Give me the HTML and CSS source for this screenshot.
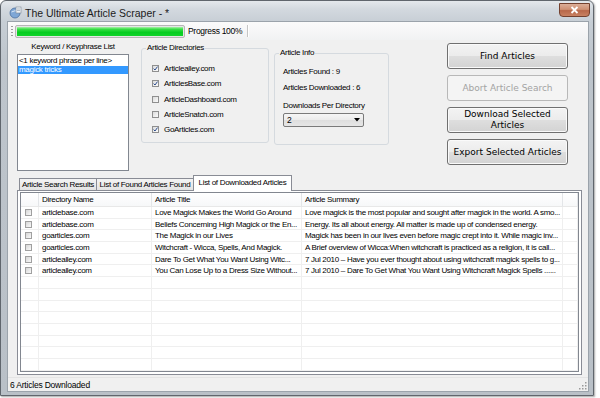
FILE: index.html
```html
<!DOCTYPE html>
<html>
<head>
<meta charset="utf-8">
<title>The Ultimate Article Scraper</title>
<link rel="stylesheet" href="styles.css">
</head>
<body>
<div class="window">
  <div class="titlebar">
    <svg class="app-icon" width="13" height="13" viewBox="0 0 13 13">
      <circle cx="6" cy="7" r="5" fill="#7fa7d6" stroke="#4a6f9e" stroke-width="0.8"/>
      <path d="M2.5 6 Q6 3.5 9.5 6" fill="none" stroke="#dbe8f6" stroke-width="1"/>
      <rect x="7" y="1" width="5" height="6" fill="#eef2f6" stroke="#7d8894" stroke-width="0.6"/>
      <path d="M8 3h3M8 4.5h3" stroke="#8a96a3" stroke-width="0.6"/>
    </svg>
    <span class="title">The Ultimate Article Scraper - *</span>
    <div class="close">
      <svg width="9" height="8" viewBox="0 0 9 8"><path d="M1.5 1l6 6M7.5 1l-6 6" stroke="#fff" stroke-width="1.8"/></svg>
    </div>
  </div>
  <div class="client">
    <div class="toolstrip">
      <span class="grip"></span>
      <div class="progress"><div class="progress-fill" style="width:100%"></div></div>
      <span class="progress-label">Progress 100%</span>
      <span class="sep"></span>
    </div>
    <div class="top">
      <div class="kw">
        <div class="kw-label">Keyword / Keyphrase List</div>
        <div class="listbox">
          <div class="item">&lt;1 keyword phrase per line&gt;</div>
          <div class="item selected">magick tricks</div>
        </div>
      </div>
      <div class="group dirs">
        <span class="group-label">Article Directories</span>
        <div class="check-row"><span class="cb"><svg width="5" height="5" viewBox="0 0 5 5"><path d="M0.6 2.6L2 4L4.5 0.6" fill="none" stroke="#2c4c8c" stroke-width="1"/></svg></span>Articlealley.com</div>
        <div class="check-row"><span class="cb"><svg width="5" height="5" viewBox="0 0 5 5"><path d="M0.6 2.6L2 4L4.5 0.6" fill="none" stroke="#2c4c8c" stroke-width="1"/></svg></span>ArticlesBase.com</div>
        <div class="check-row"><span class="cb"></span>ArticleDashboard.com</div>
        <div class="check-row"><span class="cb"></span>ArticleSnatch.com</div>
        <div class="check-row"><span class="cb"><svg width="5" height="5" viewBox="0 0 5 5"><path d="M0.6 2.6L2 4L4.5 0.6" fill="none" stroke="#2c4c8c" stroke-width="1"/></svg></span>GoArticles.com</div>
      </div>
      <div class="group info">
        <span class="group-label">Article Info</span>
        <div class="info-line first">Articles Found : 9</div>
        <div class="info-line">Articles Downloaded : 6</div>
        <div class="info-line spaced">Downloads Per Directory</div>
        <div class="combo"><span>2</span><svg width="6" height="4" viewBox="0 0 6 4"><path d="M0 0h6L3 3.5z" fill="#000"/></svg></div>
      </div>
      <div class="buttons">
        <div class="btn">Find Articles</div>
        <div class="btn disabled">Abort Article Search</div>
        <div class="btn">Download Selected<br>Articles</div>
        <div class="btn">Export Selected Articles</div>
      </div>
    </div>
    <div class="tabstrip">
      <div class="tab t1">Article Search Results</div>
      <div class="tab t2">List of Found Articles Found</div>
      <div class="tab t3 active">List of Downloaded Articles</div>
    </div>
    <div class="tabpage">
      <div class="listview">
        <div class="lv-row lv-head">
          <div class="hc"></div><div class="hc">Directory Name</div><div class="hc">Article Title</div><div class="hc">Article Summary</div><div class="hc"></div>
        </div>
        <div class="lv-row"><div class="c"><span class="rcb"></span></div><div class="c">articlebase.com</div><div class="c">Love Magick Makes the World Go Around</div><div class="c">Love magick is the most popular and sought after magick in the world. A smo...</div><div class="c"></div></div>
        <div class="lv-row"><div class="c"><span class="rcb"></span></div><div class="c">articlebase.com</div><div class="c">Beliefs Concerning High Magick or the En...</div><div class="c">Energy. Its all about energy. All matter is made up of condensed energy.</div><div class="c"></div></div>
        <div class="lv-row"><div class="c"><span class="rcb"></span></div><div class="c">goarticles.com</div><div class="c">The Magick in our Lives</div><div class="c">Magick has been in our lives even before magic crept into it. While magic inv...</div><div class="c"></div></div>
        <div class="lv-row"><div class="c"><span class="rcb"></span></div><div class="c">goarticles.com</div><div class="c">Witchcraft - Wicca, Spells, And Magick.</div><div class="c">A Brief overview of Wicca:When witchcraft is practiced as a religion, it is call...</div><div class="c"></div></div>
        <div class="lv-row"><div class="c"><span class="rcb"></span></div><div class="c">articlealley.com</div><div class="c">Dare To Get What You Want Using Witc...</div><div class="c">7 Jul 2010 – Have you ever thought about using witchcraft magick spells to g...</div><div class="c"></div></div>
        <div class="lv-row"><div class="c"><span class="rcb"></span></div><div class="c">articlealley.com</div><div class="c">You Can Lose Up to a Dress Size Without...</div><div class="c">7 Jul 2010 – Dare To Get What You Want Using Witchcraft Magick Spells ......</div><div class="c"></div></div>
        <div class="lv-row"><div class="c"></div><div class="c"></div><div class="c"></div><div class="c"></div><div class="c"></div></div>
        <div class="lv-row"><div class="c"></div><div class="c"></div><div class="c"></div><div class="c"></div><div class="c"></div></div>
        <div class="lv-row"><div class="c"></div><div class="c"></div><div class="c"></div><div class="c"></div><div class="c"></div></div>
        <div class="lv-row"><div class="c"></div><div class="c"></div><div class="c"></div><div class="c"></div><div class="c"></div></div>
        <div class="lv-row"><div class="c"></div><div class="c"></div><div class="c"></div><div class="c"></div><div class="c"></div></div>
        <div class="lv-row"><div class="c"></div><div class="c"></div><div class="c"></div><div class="c"></div><div class="c"></div></div>
        <div class="lv-row"><div class="c"></div><div class="c"></div><div class="c"></div><div class="c"></div><div class="c"></div></div>
        <div class="lv-row"><div class="c"></div><div class="c"></div><div class="c"></div><div class="c"></div><div class="c"></div></div>
      </div>
    </div>
    <div class="statusbar">
      <span class="status-text">6 Articles Downloaded</span>
      <svg class="resize-grip" width="8" height="8" viewBox="0 0 8 8">
        <g fill="#9a9a9a"><rect x="6" y="0" width="1.5" height="1.5"/><rect x="3" y="3" width="1.5" height="1.5"/><rect x="6" y="3" width="1.5" height="1.5"/><rect x="0" y="6" width="1.5" height="1.5"/><rect x="3" y="6" width="1.5" height="1.5"/><rect x="6" y="6" width="1.5" height="1.5"/></g>
      </svg>
    </div>
  </div>
</div>
</body>
</html>
```
FILE: styles.css
```css
* { box-sizing: border-box; }
html, body { margin: 0; padding: 0; background: #ffffff; }
body {
  width: 600px; height: 398px; overflow: hidden;
  font-family: "Liberation Sans", Arial, sans-serif;
  font-size: 8px; letter-spacing: -0.3px; color: #000;
}
.window {
  width: 594px; height: 396px;
  border: 1px solid #60666d;
  border-radius: 6px 6px 0 0;
  background: linear-gradient(180deg, #e4e8ec 0, #d3d9df 8px, #c7ced5 21px, #bec5cc 60px, #b9c0c7 100%);
  box-shadow: 1px 1px 2px rgba(0,0,0,0.35);
  display: flex; flex-direction: column;
}
.titlebar {
  height: 21px; display: flex; align-items: center;
  padding-left: 8px;
}
.app-icon { margin-top: 1px; }
.title {
  margin-left: 3px; font-family: "Liberation Sans", Arial, sans-serif;
  font-size: 10.5px; letter-spacing: 0; color: #1b1b1b; margin-top: 2px;
}
.close {
  margin-left: auto; margin-right: 3px; align-self: flex-start; margin-top: 2px;
  width: 31px; height: 14px;
  border: 1px solid #74412f; border-radius: 0 0 4px 4px;
  background: linear-gradient(180deg, #dcae98 0, #cf9174 45%, #b8684a 55%, #c98262 100%);
  display: flex; align-items: center; justify-content: center;
}
.client {
  flex: 1; margin: 0 5px 4px 7px;
  background: #f0f0f0;
  box-shadow: 0 0 0 1px #9ba3ab;
  display: flex; flex-direction: column;
}
.toolstrip {
  height: 18px; display: flex; align-items: center;
  padding-left: 3px;
  background: linear-gradient(180deg, #fbfbfb, #f1f2f3);
}
.grip {
  width: 2px; height: 11px;
  background: repeating-linear-gradient(180deg, #9c9c9c 0 1px, transparent 1px 3px);
}
.progress {
  margin-left: 2px; width: 170px; height: 13px;
  border: 1px solid #b6b6b6; border-radius: 2px;
  background: #e6e6e6; padding: 1px;
}
.progress-fill {
  height: 100%;
  background: linear-gradient(180deg, #a8f3a8 0, #38de45 25%, #06cd22 60%, #12d42c 100%);
}
.progress-label { margin-left: 3px; font-size: 8.5px; }
.sep {
  margin-left: 5px; width: 2px; height: 12px;
  border-left: 1px solid #c5c5c5; border-right: 1px solid #ffffff;
}
.top { height: 135px; display: flex; align-items: flex-start; }
.kw { margin-left: 9px; width: 112px; margin-top: 2px; }
.kw-label { line-height: 10px; text-align: center; }
.listbox {
  margin-top: 2px; height: 117px; background: #fff;
  border: 1px solid #828790; padding-top: 2px;
}
.item { line-height: 8.5px; padding-left: 1px; white-space: nowrap; }
.item.selected { background: #3399ff; color: #fff; }
.group {
  position: relative;
  border: 1px solid #d5dadf; border-radius: 3px;
}
.group-label {
  position: absolute; top: -6px; left: 4px;
  background: #f0f0f0; padding: 0 1px; line-height: 10px;
}
.dirs { margin-left: 12px; margin-top: 8px; width: 128px; height: 95px; padding: 12px 0 0 10px; }
.check-row { height: 15.3px; display: flex; align-items: center; }
.cb {
  width: 7px; height: 7px; margin-right: 5px;
  border: 1px solid #8f8f8f;
  background: linear-gradient(135deg, #dcdcdc, #fbfbfb);
  display: flex; align-items: center; justify-content: center;
}
.info { margin-left: 5px; margin-top: 13px; width: 115px; height: 92px; padding: 13px 0 0 8px; }
.info-line { line-height: 10px; margin-bottom: 6px; }
.info-line.spaced { margin-top: 8px; margin-bottom: 2px; }
.combo {
  width: 81px; height: 14px;
  border: 1px solid #7a7a7a; border-radius: 2px;
  background: linear-gradient(180deg, #f6f6f6 0, #ebebeb 50%, #dedede 50%, #e6e6e6 100%);
  display: flex; align-items: center; justify-content: space-between;
  padding: 0 3px 0 3px; font-size: 8.5px;
}
.buttons { margin-left: 58px; margin-top: 3px; width: 121px; display: flex; flex-direction: column; gap: 6px; }
.btn {
  height: 26px; border: 1px solid #707070; border-radius: 3px;
  background: linear-gradient(180deg, #f3f3f3 0, #ececec 48%, #dedede 52%, #d3d3d3 100%);
  box-shadow: inset 0 0 0 1px #fafafa;
  display: flex; align-items: center; justify-content: center; text-align: center;
  font-family: "DejaVu Sans", Verdana, sans-serif; font-size: 9px; letter-spacing: 0;
  line-height: 11px;
}
.btn.disabled {
  border-color: #b8b8b8; background: #f4f4f4; box-shadow: none; color: #a3a3a3;
}
.tabstrip { height: 15px; display: flex; align-items: flex-end; margin-left: 11px; }
.tab {
  height: 12px; line-height: 11px; text-align: center; white-space: nowrap;
  border: 1px solid #898c95; border-bottom: none;
  background: linear-gradient(180deg, #f4f4f4, #e3e3e3);
}
.t1 { width: 78px; }
.t2 { width: 97px; border-left: none; }
.t3 { width: 99px; }
.tab.active {
  height: 16px; line-height: 14px; margin-left: -1px; margin-bottom: -1px;
  background: #ffffff; position: relative; z-index: 1;
}
.tabpage {
  margin-left: 9px; width: 565px; height: 185px;
  border: 1px solid #898c95; background: #fff;
  padding: 1px 2px 2px 2px;
}
.listview {
  height: 100%; border: 1px solid #828790; background: #fff; overflow: hidden;
}
.lv-row {
  display: grid; grid-template-columns: 18px 113px 150px 261px 1fr;
  height: 11.7px;
}
.lv-head { height: 14px; background: linear-gradient(180deg, #ffffff, #f6f7f8); }
.hc {
  border-right: 1px solid #e3e5e8; border-bottom: 1px solid #e8e8e8;
  padding-left: 3px; line-height: 13px; white-space: nowrap;
}
.c {
  border-right: 1px solid #efefef; border-bottom: 1px solid #efefef;
  padding-left: 3px; line-height: 11px; white-space: nowrap; overflow: hidden;
  display: flex; align-items: center;
}
.c:first-child { padding-left: 4px; }
.rcb {
  width: 7px; height: 7px; border: 1px solid #a0a0a0;
  background: linear-gradient(135deg, #d6d6d6, #fafafa);
}
.statusbar {
  margin-top: auto; height: 14px; display: flex; align-items: center;
  padding-left: 2px; padding-right: 1px;
  border-top: 1px solid #e4e4e4;
}
.status-text { font-size: 8.5px; letter-spacing: -0.2px; }
.resize-grip { margin-left: auto; align-self: flex-end; margin-bottom: 1px; }
```
